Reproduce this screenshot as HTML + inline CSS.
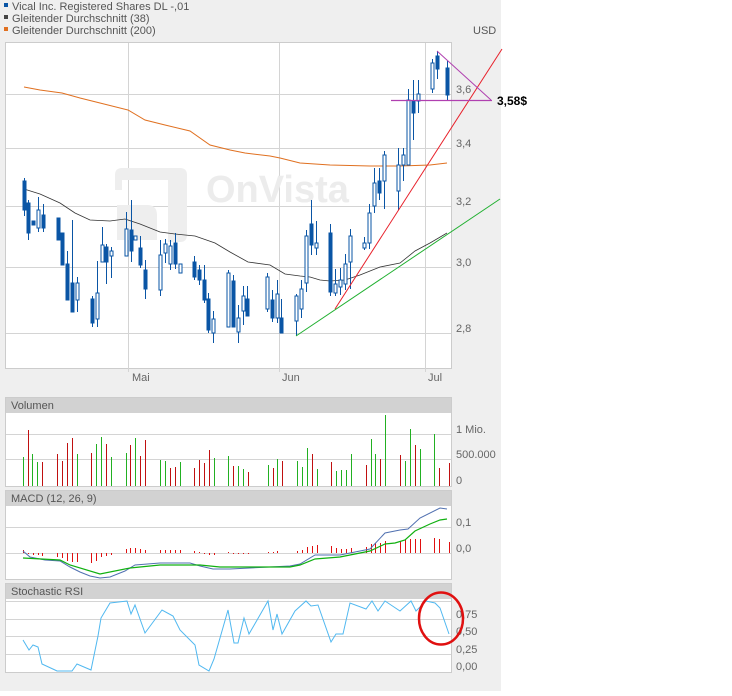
<!DOCTYPE html>
<html><head><meta charset="utf-8"><style>
html,body{margin:0;padding:0;background:#fff;}
body{width:732px;height:691px;overflow:hidden;font-family:"Liberation Sans",sans-serif;}
</style></head><body>
<svg width="732" height="691" xmlns="http://www.w3.org/2000/svg" font-family="Liberation Sans, sans-serif">
<rect x="0" y="0" width="501" height="691" fill="#efefef"/>
<!-- legend -->
<rect x="4" y="3" width="4" height="4" fill="#0a55a5"/><text x="12" y="10" font-size="11" fill="#555">Vical Inc. Registered Shares DL -,01</text>
<rect x="4" y="15" width="4" height="4" fill="#444"/><text x="12" y="22" font-size="11" fill="#555">Gleitender Durchschnitt (38)</text>
<rect x="4" y="27" width="4" height="4" fill="#e07020"/><text x="12" y="34" font-size="11" fill="#555">Gleitender Durchschnitt (200)</text>
<text x="473" y="34" font-size="11" fill="#555">USD</text>
<!-- main plot -->
<rect x="5.5" y="42.5" width="446" height="326" fill="#fff" stroke="#ccc"/>
<g stroke="#d4d4d4" stroke-width="1">
<line x1="6" y1="94.5" x2="451" y2="94.5"/><line x1="6" y1="148.5" x2="451" y2="148.5"/>
<line x1="6" y1="206.5" x2="451" y2="206.5"/><line x1="6" y1="267.5" x2="451" y2="267.5"/>
<line x1="6" y1="333.5" x2="451" y2="333.5"/>
<line x1="128.5" y1="43" x2="128.5" y2="372"/><line x1="279.5" y1="43" x2="279.5" y2="372"/><line x1="425.5" y1="43" x2="425.5" y2="372"/>
</g>
<!-- watermark -->
<g fill="#eeeeee">
<path d="M115 175 q0 -7 7 -7 h58 q7 0 7 7 v60 q0 7 -7 7 h-12 v-62 h-46 v10 h-7z"/>
<path d="M117 205 h30 q10 0 10 10 v25 h-40z"/>
<text x="206" y="202" font-size="38" font-weight="bold" fill="#ececec">OnVista</text>
</g>
<g font-size="11" fill="#666">
<text x="456" y="93">3,6</text><text x="456" y="147">3,4</text><text x="456" y="205">3,2</text><text x="456" y="266">3,0</text><text x="456" y="332">2,8</text>
<text x="132" y="381">Mai</text><text x="282" y="381">Jun</text><text x="428" y="381">Jul</text>
</g>
<!-- moving averages -->
<polyline fill="none" stroke="#e07020" stroke-width="1" points="24,87 40,90 62,93 80,98 100,103 128,110 145,120 165,125 190,131 210,145 230,150 245,153 270,156 280,158 300,163 330,165 370,166 400,166 430,165 447,163"/>
<polyline fill="none" stroke="#333" stroke-width="0.8" points="24,189 40,194 60,203 75,213 90,220 110,221 125,219 140,224 160,232 175,234 195,236 215,243 230,252 248,262 270,265 285,274 300,276 310,277 320,280 330,281 345,280 360,275 380,267 400,263 415,251 430,243 447,233"/>
<!-- candles -->
<g stroke="#0a55a5" stroke-width="1" fill="#0a55a5">
<line x1="24.5" y1="178" x2="24.5" y2="216"/><rect x="23" y="181" width="3" height="29"/>
<line x1="28.5" y1="200" x2="28.5" y2="240"/><rect x="27" y="203" width="3" height="30"/>
<rect x="32" y="221" width="3" height="4"/>
<line x1="38.5" y1="197" x2="38.5" y2="232"/><rect x="37" y="210" width="3" height="18" fill="#fff"/>
<line x1="43.5" y1="204" x2="43.5" y2="232"/><rect x="42" y="215" width="3" height="13"/>
<rect x="57" y="218" width="3" height="22"/>
<line x1="62.5" y1="233" x2="62.5" y2="265"/><rect x="61" y="233" width="3" height="32"/>
<line x1="67.5" y1="251" x2="67.5" y2="300"/><rect x="66" y="264" width="3" height="36"/>
<line x1="72.5" y1="220" x2="72.5" y2="312"/><rect x="71" y="283" width="3" height="29"/>
<line x1="77.5" y1="277" x2="77.5" y2="312"/><rect x="76" y="283" width="3" height="17" fill="#fff"/>
<line x1="92.5" y1="296" x2="92.5" y2="327"/><rect x="91" y="299" width="3" height="24"/>
<line x1="97.5" y1="261" x2="97.5" y2="327"/><rect x="96" y="293" width="3" height="26" fill="#fff"/>
<line x1="102.5" y1="227" x2="102.5" y2="262"/><rect x="101" y="245" width="3" height="17" fill="#fff"/>
<line x1="106.5" y1="244" x2="106.5" y2="284"/><rect x="105" y="247" width="3" height="15"/>
<line x1="111.5" y1="247" x2="111.5" y2="278"/><rect x="110" y="251" width="3" height="5" fill="#fff"/>
<line x1="126.5" y1="212" x2="126.5" y2="256"/><rect x="125" y="229" width="3" height="27" fill="#fff"/>
<line x1="131.5" y1="200" x2="131.5" y2="262"/><rect x="130" y="230" width="3" height="21"/>
<rect x="134" y="236" width="3" height="4" fill="#fff"/>
<line x1="140.5" y1="236" x2="140.5" y2="268"/><rect x="139" y="248" width="3" height="17"/>
<line x1="145.5" y1="260" x2="145.5" y2="299"/><rect x="144" y="270" width="3" height="19"/>
<line x1="160.5" y1="240" x2="160.5" y2="296"/><rect x="159" y="255" width="3" height="35" fill="#fff"/>
<line x1="165.5" y1="239" x2="165.5" y2="263"/><rect x="164" y="244" width="3" height="9" fill="#fff"/>
<line x1="170.5" y1="240" x2="170.5" y2="270"/><rect x="169" y="246" width="3" height="18" fill="#fff"/>
<line x1="175.5" y1="233" x2="175.5" y2="269"/><rect x="174" y="243" width="3" height="21"/>
<rect x="179" y="264" width="3" height="9" fill="#fff"/>
<line x1="194.5" y1="256" x2="194.5" y2="280"/><rect x="193" y="262" width="3" height="15"/>
<line x1="199.5" y1="265" x2="199.5" y2="285"/><rect x="198" y="270" width="3" height="10"/>
<line x1="204.5" y1="265" x2="204.5" y2="303"/><rect x="203" y="280" width="3" height="20"/>
<line x1="208.5" y1="293" x2="208.5" y2="333"/><rect x="207" y="299" width="3" height="31"/>
<line x1="213.5" y1="311" x2="213.5" y2="343"/><rect x="212" y="319" width="3" height="14" fill="#fff"/>
<line x1="228.5" y1="270" x2="228.5" y2="327"/><rect x="227" y="273" width="3" height="54" fill="#fff"/>
<line x1="233.5" y1="275" x2="233.5" y2="327"/><rect x="232" y="281" width="3" height="46"/>
<line x1="238.5" y1="305" x2="238.5" y2="343"/><rect x="237" y="318" width="3" height="14" fill="#fff"/>
<line x1="243.5" y1="286" x2="243.5" y2="325"/><rect x="242" y="296" width="3" height="15" fill="#fff"/>
<line x1="247.5" y1="286" x2="247.5" y2="316"/><rect x="246" y="299" width="3" height="17"/>
<line x1="267.5" y1="273" x2="267.5" y2="312"/><rect x="266" y="277" width="3" height="32" fill="#fff"/>
<line x1="272.5" y1="290" x2="272.5" y2="322"/><rect x="271" y="300" width="3" height="18"/>
<line x1="277.5" y1="280" x2="277.5" y2="323"/><rect x="276" y="294" width="3" height="24" fill="#fff"/>
<line x1="281.5" y1="299" x2="281.5" y2="333"/><rect x="280" y="318" width="3" height="15"/>
<line x1="296.5" y1="294" x2="296.5" y2="336"/><rect x="295" y="296" width="3" height="25" fill="#fff"/>
<line x1="301.5" y1="280" x2="301.5" y2="318"/><rect x="300" y="289" width="3" height="20" fill="#fff"/>
<line x1="306.5" y1="230" x2="306.5" y2="292"/><rect x="305" y="236" width="3" height="47" fill="#fff"/>
<line x1="311.5" y1="200" x2="311.5" y2="255"/><rect x="310" y="224" width="3" height="21"/>
<line x1="316.5" y1="221" x2="316.5" y2="255"/><rect x="315" y="243" width="3" height="5" fill="#fff"/>
<line x1="330.5" y1="224" x2="330.5" y2="296"/><rect x="329" y="233" width="3" height="59"/>
<line x1="335.5" y1="269" x2="335.5" y2="296"/><rect x="334" y="284" width="3" height="9" fill="#fff"/>
<line x1="340.5" y1="268" x2="340.5" y2="295"/><rect x="339" y="280" width="3" height="7" fill="#fff"/>
<line x1="345.5" y1="254" x2="345.5" y2="290"/><rect x="344" y="264" width="3" height="20" fill="#fff"/>
<line x1="350.5" y1="229" x2="350.5" y2="289"/><rect x="349" y="236" width="3" height="26" fill="#fff"/>
<line x1="364.5" y1="237" x2="364.5" y2="250"/><rect x="363" y="243" width="3" height="5" fill="#fff"/>
<line x1="369.5" y1="204" x2="369.5" y2="249"/><rect x="368" y="213" width="3" height="30" fill="#fff"/>
<line x1="374.5" y1="168" x2="374.5" y2="213"/><rect x="373" y="183" width="3" height="23" fill="#fff"/>
<line x1="379.5" y1="168" x2="379.5" y2="200"/><rect x="378" y="181" width="3" height="12"/>
<line x1="384.5" y1="151" x2="384.5" y2="209"/><rect x="383" y="155" width="3" height="26" fill="#fff"/>
<line x1="398.5" y1="148" x2="398.5" y2="210"/><rect x="397" y="165" width="3" height="26" fill="#fff"/>
<line x1="403.5" y1="148" x2="403.5" y2="181"/><rect x="402" y="155" width="3" height="10" fill="#fff"/>
<line x1="408.5" y1="89" x2="408.5" y2="165"/><rect x="407" y="100" width="3" height="65" fill="#fff"/>
<line x1="413.5" y1="80" x2="413.5" y2="140"/><rect x="412" y="101" width="3" height="12"/>
<line x1="418.5" y1="80" x2="418.5" y2="113"/><rect x="417" y="94" width="3" height="7" fill="#fff"/>
<line x1="432.5" y1="59" x2="432.5" y2="93"/><rect x="431" y="63" width="3" height="26" fill="#fff"/>
<line x1="437.5" y1="51" x2="437.5" y2="79"/><rect x="436" y="56" width="3" height="13"/>
<line x1="447.5" y1="61" x2="447.5" y2="100"/><rect x="446" y="68" width="3" height="27"/>
</g>
<!-- trend lines -->
<line x1="335" y1="309" x2="502" y2="49" stroke="#e8202a" stroke-width="1"/>
<line x1="296" y1="336" x2="500" y2="199" stroke="#20b030" stroke-width="1"/>
<line x1="391" y1="100.5" x2="492" y2="100.5" stroke="#b040b0" stroke-width="1.2"/>
<line x1="437" y1="51" x2="491" y2="100" stroke="#b040b0" stroke-width="1"/>
<text x="497" y="105" font-size="12" font-weight="bold" fill="#000">3,58$</text>

<!-- Volume -->
<rect x="5.5" y="397.5" width="446" height="89" fill="#fff" stroke="#ccc"/>
<rect x="6" y="398" width="445" height="15" fill="#d2d2d2"/>
<text x="11" y="409" font-size="11" fill="#555">Volumen</text>
<g stroke="#d4d4d4"><line x1="6" y1="434.5" x2="451" y2="434.5"/><line x1="6" y1="459.5" x2="451" y2="459.5"/></g>
<g font-size="11" fill="#666"><text x="456" y="433">1 Mio.</text><text x="456" y="458">500.000</text><text x="456" y="484">0</text></g>
<g stroke-width="1">
<g stroke="#22b022">
<path d="M23.5 486V457M32.5 486V454M37.5 486V462M77.5 486V454M96.5 486V444M101.5 486V437M111.5 486V457M126.5 486V453M135.5 486V438M160.5 486V460M165.5 486V461M180.5 486V462M214.5 486V458M228.5 486V456M238.5 486V466M243.5 486V469M268.5 486V465M277.5 486V459M297.5 486V461M302.5 486V467M307.5 486V448M317.5 486V469M336.5 486V471M341.5 486V470M346.5 486V470M351.5 486V454M371.5 486V439M375.5 486V454M385.5 486V415M405.5 486V461M410.5 486V429M420.5 486V449M434.5 486V434"/>
</g>
<g stroke="#c01010">
<path d="M28.5 486V430M42.5 486V462M57.5 486V454M62.5 486V461M67.5 486V443M72.5 486V438M91.5 486V453M106.5 486V444M130.5 486V445M140.5 486V456M145.5 486V440M170.5 486V468M175.5 486V467M194.5 486V468M199.5 486V460M204.5 486V463M209.5 486V450M233.5 486V466M248.5 486V472M273.5 486V468M282.5 486V461M312.5 486V454M331.5 486V462M366.5 486V465M380.5 486V459M400.5 486V455M415.5 486V445M439.5 486V468M449.5 486V463"/>
</g>
</g>

<!-- MACD -->
<rect x="5.5" y="490.5" width="446" height="89" fill="#fff" stroke="#ccc"/>
<rect x="6" y="491" width="445" height="15" fill="#d2d2d2"/>
<text x="11" y="502" font-size="11" fill="#555">MACD (12, 26, 9)</text>
<g stroke="#d4d4d4"><line x1="6" y1="527.5" x2="451" y2="527.5"/><line x1="6" y1="553.5" x2="451" y2="553.5"/></g>
<g font-size="11" fill="#666"><text x="456" y="526">0,1</text><text x="456" y="552">0,0</text></g>
<path stroke="#e01010" stroke-width="1" d="M23.5 553V550M28.5 553V554M33.5 553V555M38.5 553V555M42.5 553V556M57.5 553V557M62.5 553V558M67.5 553V561M72.5 553V562M77.5 553V562M91.5 553V563M96.5 553V561M101.5 553V557M106.5 553V556M111.5 553V555M126.5 553V549M130.5 553V548M135.5 553V548M140.5 553V549M145.5 553V550M160.5 553V550M165.5 553V550M170.5 553V550M175.5 553V550M180.5 553V550M194.5 553V551M199.5 553V552M204.5 553V554M209.5 553V555M214.5 553V555M228.5 553V552M233.5 553V554M238.5 553V554M243.5 553V554M248.5 553V554M268.5 553V552M273.5 553V552M277.5 553V551M282.5 553V553M297.5 553V551M302.5 553V550M307.5 553V547M312.5 553V546M317.5 553V545M331.5 553V546M336.5 553V548M341.5 553V549M346.5 553V549M351.5 553V548M366.5 553V547M371.5 553V544M375.5 553V543M380.5 553V543M385.5 553V541M400.5 553V541M405.5 553V540M410.5 553V539M415.5 553V539M420.5 553V539M434.5 553V538M439.5 553V539M449.5 553V542"/>
<polyline fill="none" stroke="#5070b0" stroke-width="1" points="23,551 30,557 45,560 60,561 70,567 80,572 90,576 100,578 110,577 125,571 135,565 160,563 190,563 200,566 213,569 230,569 250,568 290,566 300,564 315,555 340,555 355,552 370,549 385,533 400,530 408,529 420,518 440,508 447,509"/>
<polyline fill="none" stroke="#10b010" stroke-width="1.2" points="23,558 60,560 70,565 100,574 130,568 160,565 200,565 220,567 290,567 300,565 315,559 340,557 370,551 385,544 395,543 405,540 415,531 430,524 440,520 447,519"/>

<!-- Stoch RSI -->
<rect x="5.5" y="583.5" width="446" height="89" fill="#fff" stroke="#ccc"/>
<rect x="6" y="584" width="445" height="15" fill="#d2d2d2"/>
<text x="11" y="595" font-size="11" fill="#555">Stochastic RSI</text>
<g stroke="#d4d4d4"><line x1="6" y1="601.5" x2="451" y2="601.5"/><line x1="6" y1="619.5" x2="451" y2="619.5"/><line x1="6" y1="636.5" x2="451" y2="636.5"/><line x1="6" y1="654.5" x2="451" y2="654.5"/></g>
<g font-size="11" fill="#666"><text x="456" y="618">0,75</text><text x="456" y="635">0,50</text><text x="456" y="653">0,25</text><text x="456" y="670">0,00</text></g>
<polyline fill="none" stroke="#50b8f0" stroke-width="1" points="23,640 29,650 33,645 38,647 42,664 55,670 57,671 72,671 77,664 91,670 98,636 101,618 110,603 127,601 131,614 135,605 145,633 162,610 173,616 180,630 195,645 199,665 209,671 214,659 228,610 234,643 238,643 244,618 249,634 268,601 273,630 277,614 282,634 295,611 306,601 311,606 318,605 331,642 336,634 343,634 350,603 366,609 372,601 378,611 385,601 400,611 411,601 416,611 426,601 435,603 440,608 449,634"/>
<ellipse cx="441" cy="618.5" rx="22" ry="26" fill="none" stroke="#e01010" stroke-width="2.5"/>
</svg>
</body></html>
